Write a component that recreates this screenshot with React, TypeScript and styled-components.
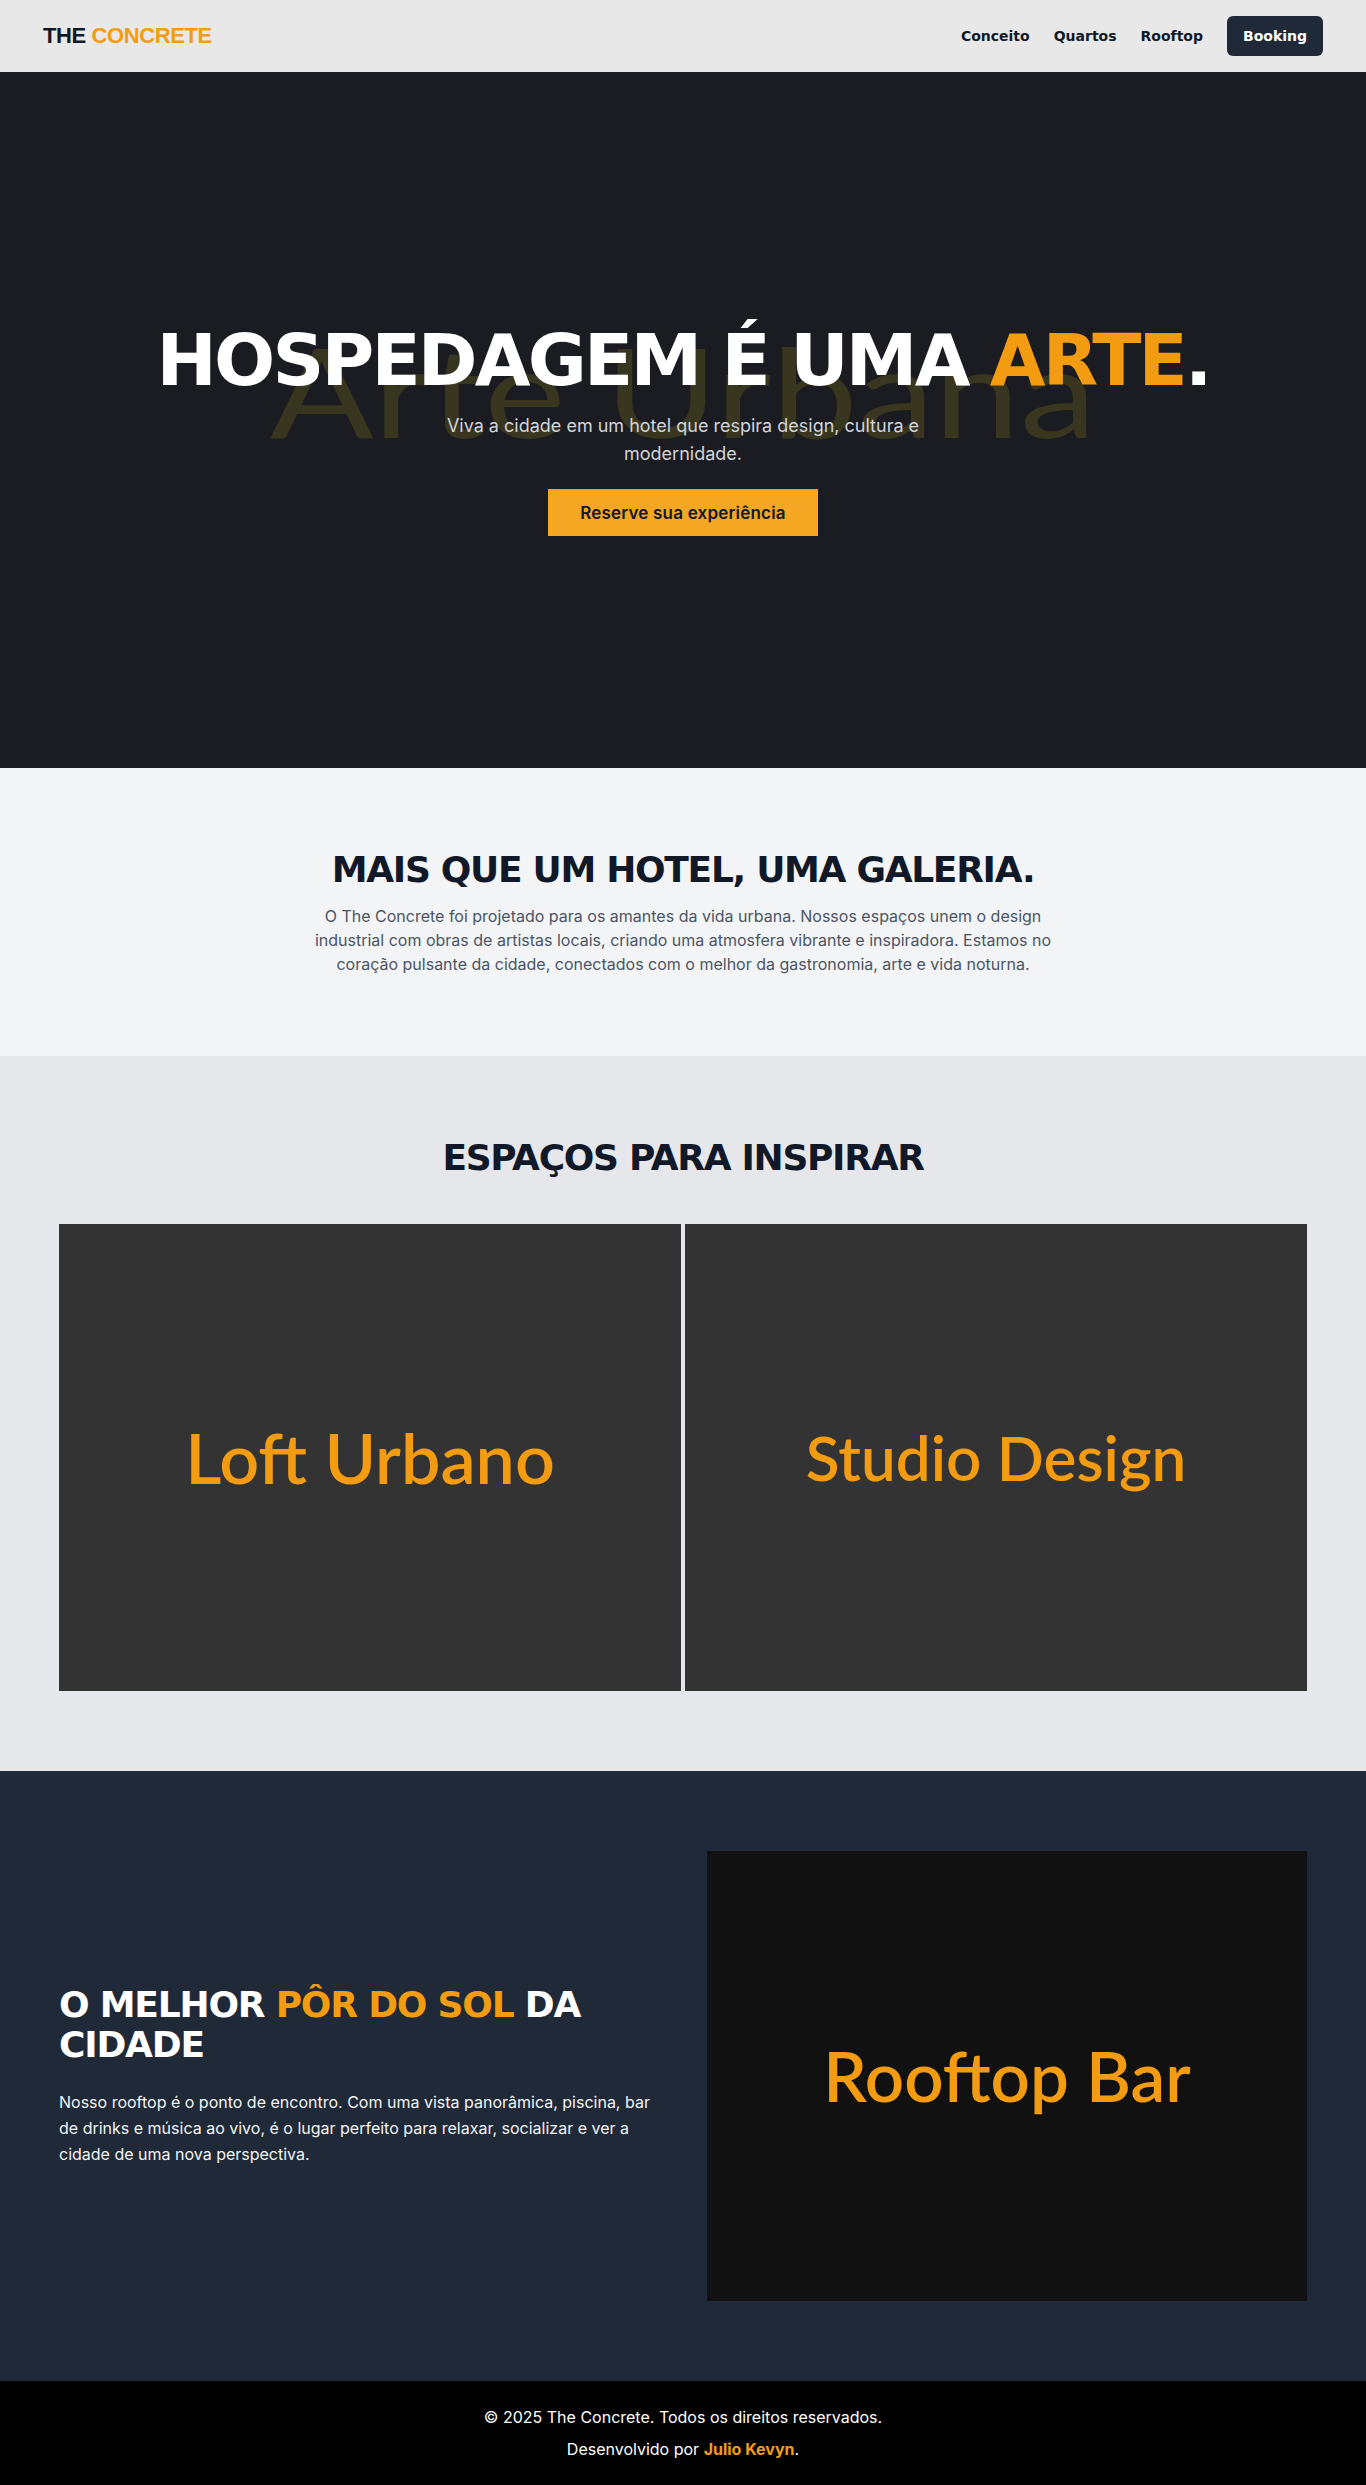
import React from "react";
import styled, { createGlobalStyle } from "styled-components";

const GlobalStyle = createGlobalStyle`
  * { box-sizing: border-box; }
  body {
    margin: 0;
    font-family: "Inter", "Liberation Sans", sans-serif;
    background: #000;
  }
`;

const AMBER = "#f39c12";
const HEAD_FONT = `"DejaVu Sans", "Liberation Sans", sans-serif`;
const LABEL_FONT = `"Lato", "Open Sans", sans-serif`;

const Nav = styled.header`
  height: 72px;
  background: #e8e8e8;
`;

const NavInner = styled.div`
  max-width: 1280px;
  height: 100%;
  margin: 0 auto;
  display: flex;
  align-items: center;
  justify-content: space-between;
`;

const Logo = styled.div`
  font-family: "Liberation Sans", Arial, sans-serif;
  font-weight: 700;
  font-size: 22px;
  letter-spacing: -0.4px;
  color: #111827;
`;

const Accent = styled.span`
  color: ${AMBER};
`;

const NavLinks = styled.nav`
  display: flex;
  align-items: center;
  gap: 24px;
`;

const NavLink = styled.a`
  font-family: ${HEAD_FONT};
  font-weight: 700;
  font-size: 14px;
  color: #111827;
  text-decoration: none;
`;

const BookingButton = styled.a`
  font-family: ${HEAD_FONT};
  font-weight: 700;
  font-size: 14px;
  line-height: 24px;
  color: #fff;
  background: #1f2937;
  padding: 8px 16px;
  border-radius: 6px;
  text-decoration: none;
`;

const Hero = styled.section`
  position: relative;
  height: 696px;
  background: #1b1c21;
  overflow: hidden;
  display: flex;
  flex-direction: column;
  align-items: center;
  justify-content: center;
  padding-top: 16px;
  text-align: center;
`;

const BgWord = styled.div`
  position: absolute;
  left: 0;
  right: 0;
  top: 238px;
  text-align: center;
  font-family: ${LABEL_FONT};
  font-size: 124px;
  line-height: 160px;
  color: #39361f;
  white-space: nowrap;
  transform: scaleX(1.24);
  pointer-events: none;
`;

const HeroContent = styled.div`
  position: relative;
  z-index: 1;
  display: flex;
  flex-direction: column;
  align-items: center;
`;

const HeroTitle = styled.h1`
  margin: 0;
  font-family: ${HEAD_FONT};
  font-weight: 700;
  font-size: 72px;
  line-height: 79px;
  letter-spacing: -2.8px;
  color: #fff;
`;

const HeroText = styled.p`
  margin: 12px 0 0;
  max-width: 540px;
  font-size: 18px;
  line-height: 28px;
  color: #d1d5db;
`;

const PrimaryButton = styled.a`
  margin-top: 21px;
  display: inline-block;
  background: #f5a623;
  color: #111827;
  font-weight: 600;
  font-size: 17px;
  letter-spacing: 0.2px;
  line-height: 24px;
  padding: 12px 32px 11px;
  text-decoration: none;
`;

const About = styled.section`
  background: #f3f4f6;
  padding: 80px 16px;
  text-align: center;
`;

const SectionTitle = styled.h2<{ $gap?: number }>`
  margin: 0 0 ${(p) => p.$gap ?? 13}px;
  font-family: ${HEAD_FONT};
  font-weight: 700;
  font-size: 36px;
  line-height: 43px;
  letter-spacing: -1.3px;
  color: #111827;
`;

const AboutText = styled.p`
  margin: 0 auto;
  max-width: 768px;
  font-size: 16px;
  line-height: 24px;
  color: #4b5563;
`;

const Rooms = styled.section`
  background: #e5e7eb;
  padding: 80px 0;
  text-align: center;
`;

const Container = styled.div`
  max-width: 1280px;
  margin: 0 auto;
  padding: 0 16px;
`;

const RoomGrid = styled.div`
  display: grid;
  grid-template-columns: 1fr 1fr;
  gap: 4px;
`;

const Placeholder = styled.div<{ $bg: string }>`
  aspect-ratio: 4 / 3;
  background: ${(p) => p.$bg};
  display: flex;
  align-items: center;
  justify-content: center;
`;

const PlaceholderLabel = styled.span<{ $size: number }>`
  font-family: ${LABEL_FONT};
  font-weight: 600;
  font-size: ${(p) => p.$size}px;
  line-height: 1;
  color: ${AMBER};
  white-space: nowrap;
`;

const Rooftop = styled.section`
  background: #1f2937;
  padding: 80px 0;
`;

const RooftopGrid = styled(Container)`
  display: grid;
  grid-template-columns: 1fr 1fr;
  gap: 48px;
  align-items: center;
`;

const RooftopTitle = styled.h2`
  margin: 0;
  font-family: ${HEAD_FONT};
  font-weight: 700;
  font-size: 36px;
  line-height: 40px;
  letter-spacing: -1.2px;
  color: #fff;
`;

const RooftopText = styled.p`
  margin: 24px 0 0;
  font-size: 16px;
  line-height: 26px;
  color: #f3f4f6;
`;

const Footer = styled.footer`
  background: #000;
  padding: 24px;
  text-align: center;
  color: #fff;
  font-size: 16px;
  line-height: 24px;
`;

const FooterLine = styled.p`
  margin: 0;
  & + & {
    margin-top: 8px;
  }
`;

const Author = styled.strong`
  color: ${AMBER};
  font-weight: 700;
`;

export default function App() {
  return (
    <>
      <GlobalStyle />
      <Nav>
        <NavInner>
          <Logo>
            THE <Accent>CONCRETE</Accent>
          </Logo>
          <NavLinks>
            <NavLink href="#conceito">Conceito</NavLink>
            <NavLink href="#quartos">Quartos</NavLink>
            <NavLink href="#rooftop">Rooftop</NavLink>
            <BookingButton href="#booking">Booking</BookingButton>
          </NavLinks>
        </NavInner>
      </Nav>

      <Hero>
        <BgWord aria-hidden="true">Arte Urbana</BgWord>
        <HeroContent>
          <HeroTitle>
            HOSPEDAGEM É UMA <Accent>ARTE</Accent>.
          </HeroTitle>
          <HeroText>
            Viva a cidade em um hotel que respira design, cultura e modernidade.
          </HeroText>
          <PrimaryButton href="#booking">Reserve sua experiência</PrimaryButton>
        </HeroContent>
      </Hero>

      <About id="conceito">
        <SectionTitle>MAIS QUE UM HOTEL, UMA GALERIA.</SectionTitle>
        <AboutText>
          O The Concrete foi projetado para os amantes da vida urbana. Nossos
          espaços unem o design industrial com obras de artistas locais, criando
          uma atmosfera vibrante e inspiradora. Estamos no coração pulsante da
          cidade, conectados com o melhor da gastronomia, arte e vida noturna.
        </AboutText>
      </About>

      <Rooms id="quartos">
        <Container>
          <SectionTitle $gap={45}>ESPAÇOS PARA INSPIRAR</SectionTitle>
          <RoomGrid>
            <Placeholder $bg="#333333">
              <PlaceholderLabel $size={70}>Loft Urbano</PlaceholderLabel>
            </Placeholder>
            <Placeholder $bg="#333333">
              <PlaceholderLabel $size={62}>Studio Design</PlaceholderLabel>
            </Placeholder>
          </RoomGrid>
        </Container>
      </Rooms>

      <Rooftop id="rooftop">
        <RooftopGrid>
          <div>
            <RooftopTitle>
              O MELHOR <Accent>PÔR DO SOL</Accent> DA CIDADE
            </RooftopTitle>
            <RooftopText>
              Nosso rooftop é o ponto de encontro. Com uma vista panorâmica,
              piscina, bar de drinks e música ao vivo, é o lugar perfeito para
              relaxar, socializar e ver a cidade de uma nova perspectiva.
            </RooftopText>
          </div>
          <Placeholder $bg="#111111">
            <PlaceholderLabel $size={69}>Rooftop Bar</PlaceholderLabel>
          </Placeholder>
        </RooftopGrid>
      </Rooftop>

      <Footer>
        <FooterLine>© 2025 The Concrete. Todos os direitos reservados.</FooterLine>
        <FooterLine>
          Desenvolvido por <Author>Julio Kevyn</Author>.
        </FooterLine>
      </Footer>
    </>
  );
}
